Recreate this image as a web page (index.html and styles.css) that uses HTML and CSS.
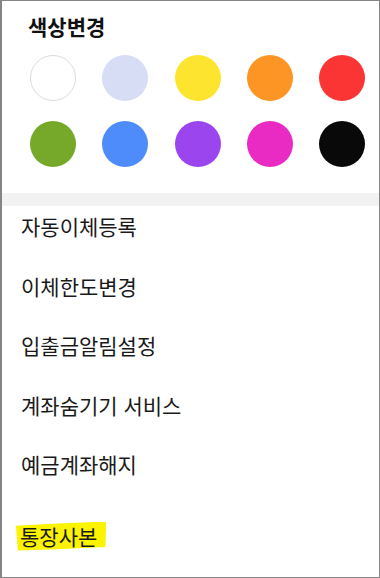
FILE: index.html
```html
<!DOCTYPE html>
<html lang="ko">
<head>
  <meta charset="UTF-8">
  <title>계좌 설정</title>
  <meta name="viewport" content="width=device-width, initial-scale=1.0">
  <link rel="stylesheet" href="styles.css">
</head>
<body>

  <div class="screen">
    <div class="color-section">
      <div class="title">색상변경</div>
      <div class="palette">
        <span class="dot white"></span>
        <span class="dot lavender"></span>
        <span class="dot yellow"></span>
        <span class="dot orange"></span>
        <span class="dot red"></span>
        <span class="dot green"></span>
        <span class="dot blue"></span>
        <span class="dot purple"></span>
        <span class="dot pink"></span>
        <span class="dot black"></span>
      </div>
    </div>

    <div class="divider"></div>

    <ul class="menu">
      <li>자동이체등록</li>
      <li>이체한도변경</li>
      <li>입출금알림설정</li>
      <li>계좌숨기기 서비스</li>
      <li>예금계좌해지</li>
      <li class="last"><span class="marker">통장사본</span></li>
    </ul>
  </div>

</body>
</html>
```

FILE: styles.css
```css
body {
  margin: 0;
  padding: 0;
  font-family: "Noto Sans CJK KR", "Noto Sans", sans-serif;
  background: #ffffff;
  color: #1a1a1a;
}

.screen {
  width: 380px;
  height: 578px;
  box-sizing: border-box;
  border: 1px solid #858585;
  border-left-width: 2px;
  overflow: hidden;
  background: #ffffff;
}

.color-section {
  padding: 12px 14px 26px 26px;
}

.title {
  font-size: 21px;
  font-weight: bold;
  line-height: 26px;
  color: #111;
}

.palette {
  display: grid;
  grid-template-columns: repeat(5, 46px);
  justify-content: space-between;
  row-gap: 20px;
  margin-top: 16px;
  margin-left: 2px;
}

.dot {
  width: 46px;
  height: 46px;
  border-radius: 50%;
  box-sizing: border-box;
}

.white { background: #ffffff; border: 1px solid #dcdcdc; }
.lavender { background: #d6ddf4; }
.yellow { background: #fde42e; }
.orange { background: #fd9524; }
.red { background: #fb3434; }
.green { background: #76a82a; }
.blue { background: #4d8cfa; }
.purple { background: #9b45ee; }
.pink { background: #e92bc3; }
.black { background: #090909; }

.divider {
  height: 13px;
  background: #f2f2f2;
}

.menu {
  list-style: none;
  margin: 0;
  padding: 0 0 0 19px;
}

.menu li {
  font-size: 21px;
  line-height: 26px;
  padding: 7px 0 26.5px;
}

.menu li.last {
  padding-top: 18px;
}

.marker {
  display: inline-block;
  margin-left: -5px;
  padding: 1px 9px 2px 4px;
  background: #fbf300;
  clip-path: polygon(0 15%, 40% 8%, 100% 0, 99% 88%, 45% 96%, 2% 100%);
}
```
